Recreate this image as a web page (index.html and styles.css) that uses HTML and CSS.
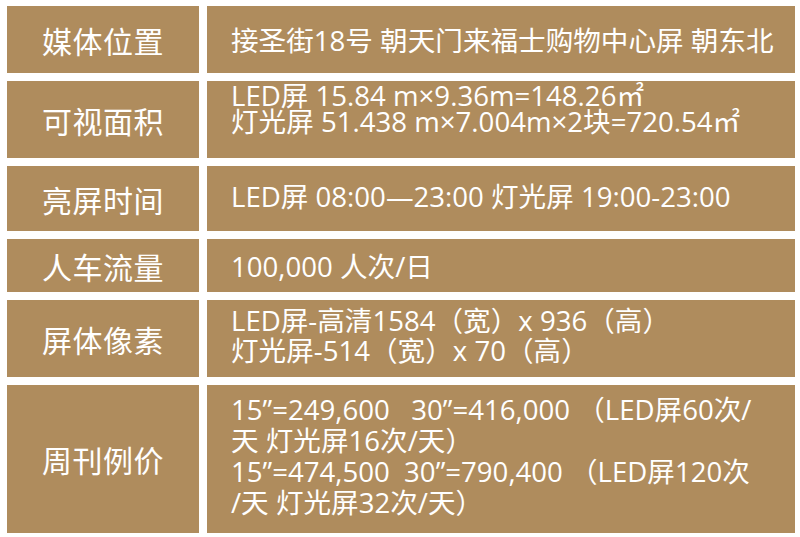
FILE: index.html
```html
<!DOCTYPE html>
<html lang="zh-CN">
<head>
<meta charset="utf-8">
<title>媒体信息</title>
<link rel="stylesheet" href="styles.css">
</head>
<body>
<div class="table">
  <div class="row r1">
    <div class="label">媒体位置</div>
    <div class="value"><div class="line">接圣街18号 朝天门来福士购物中心屏 朝东北</div></div>
  </div>
  <div class="row r2">
    <div class="label">可视面积</div>
    <div class="value top">
      <div class="line">LED屏 15.84 m×9.36m=148.26㎡</div>
      <div class="line">灯光屏 51.438 m×7.004m×2块=720.54㎡</div>
    </div>
  </div>
  <div class="row r3">
    <div class="label">亮屏时间</div>
    <div class="value"><div class="line">LED屏 08:00—23:00 灯光屏 19:00-23:00</div></div>
  </div>
  <div class="row r4">
    <div class="label">人车流量</div>
    <div class="value"><div class="line">100,000 人次/日</div></div>
  </div>
  <div class="row r5">
    <div class="label">屏体像素</div>
    <div class="value">
      <div class="line">LED屏-高清1584（宽）x 936（高）</div>
      <div class="line">灯光屏-514（宽）x 70（高）</div>
    </div>
  </div>
  <div class="row r6">
    <div class="label">周刊例价</div>
    <div class="value">
      <div class="line">15”=249,600   30”=416,000 （LED屏60次/</div>
      <div class="line">天 灯光屏16次/天）</div>
      <div class="line">15”=474,500  30”=790,400 （LED屏120次</div>
      <div class="line">/天 灯光屏32次/天）</div>
    </div>
  </div>
</div>
</body>
</html>
```

FILE: styles.css
```css
html, body {
  margin: 0;
  padding: 0;
  background: #ffffff;
}

body {
  font-family: "Open Sans", "Noto Sans CJK SC", sans-serif;
  color: #ffffff;
}

.table {
  display: flex;
  flex-direction: column;
  gap: 8px;
  padding: 6px 0 0 7px;
}

.row {
  display: flex;
  gap: 8px;
}

.r1 { height: 67px; }
.r2 { height: 77px; }
.r3 { height: 65px; }
.r4 { height: 53px; }
.r5 { height: 77px; }
.r6 { height: 148px; }

.label {
  width: 192px;
  flex: none;
  background: #af8c5d;
  display: flex;
  align-items: center;
  justify-content: center;
  font-size: 30px;
  font-family: "Noto Sans CJK SC", sans-serif;
  letter-spacing: 0.5px;
}

.value {
  width: 588px;
  flex: none;
  background: #af8c5d;
  box-sizing: border-box;
  padding-left: 24px;
  display: flex;
  flex-direction: column;
  justify-content: center;
  font-size: 27.6px;
  line-height: 28px;
  white-space: pre;
}

.value.top {
  justify-content: flex-start;
  padding-top: 1px;
}

.r3 .value { padding-bottom: 6px; }
.r5 .value { padding-bottom: 8px; }
.r6 .value { padding-bottom: 8px; }

.r2 .line { height: 26px; display: flex; align-items: center; }
.r5 .line { height: 30px; display: flex; align-items: center; }
.r6 .line { height: 31px; display: flex; align-items: center; }
```
